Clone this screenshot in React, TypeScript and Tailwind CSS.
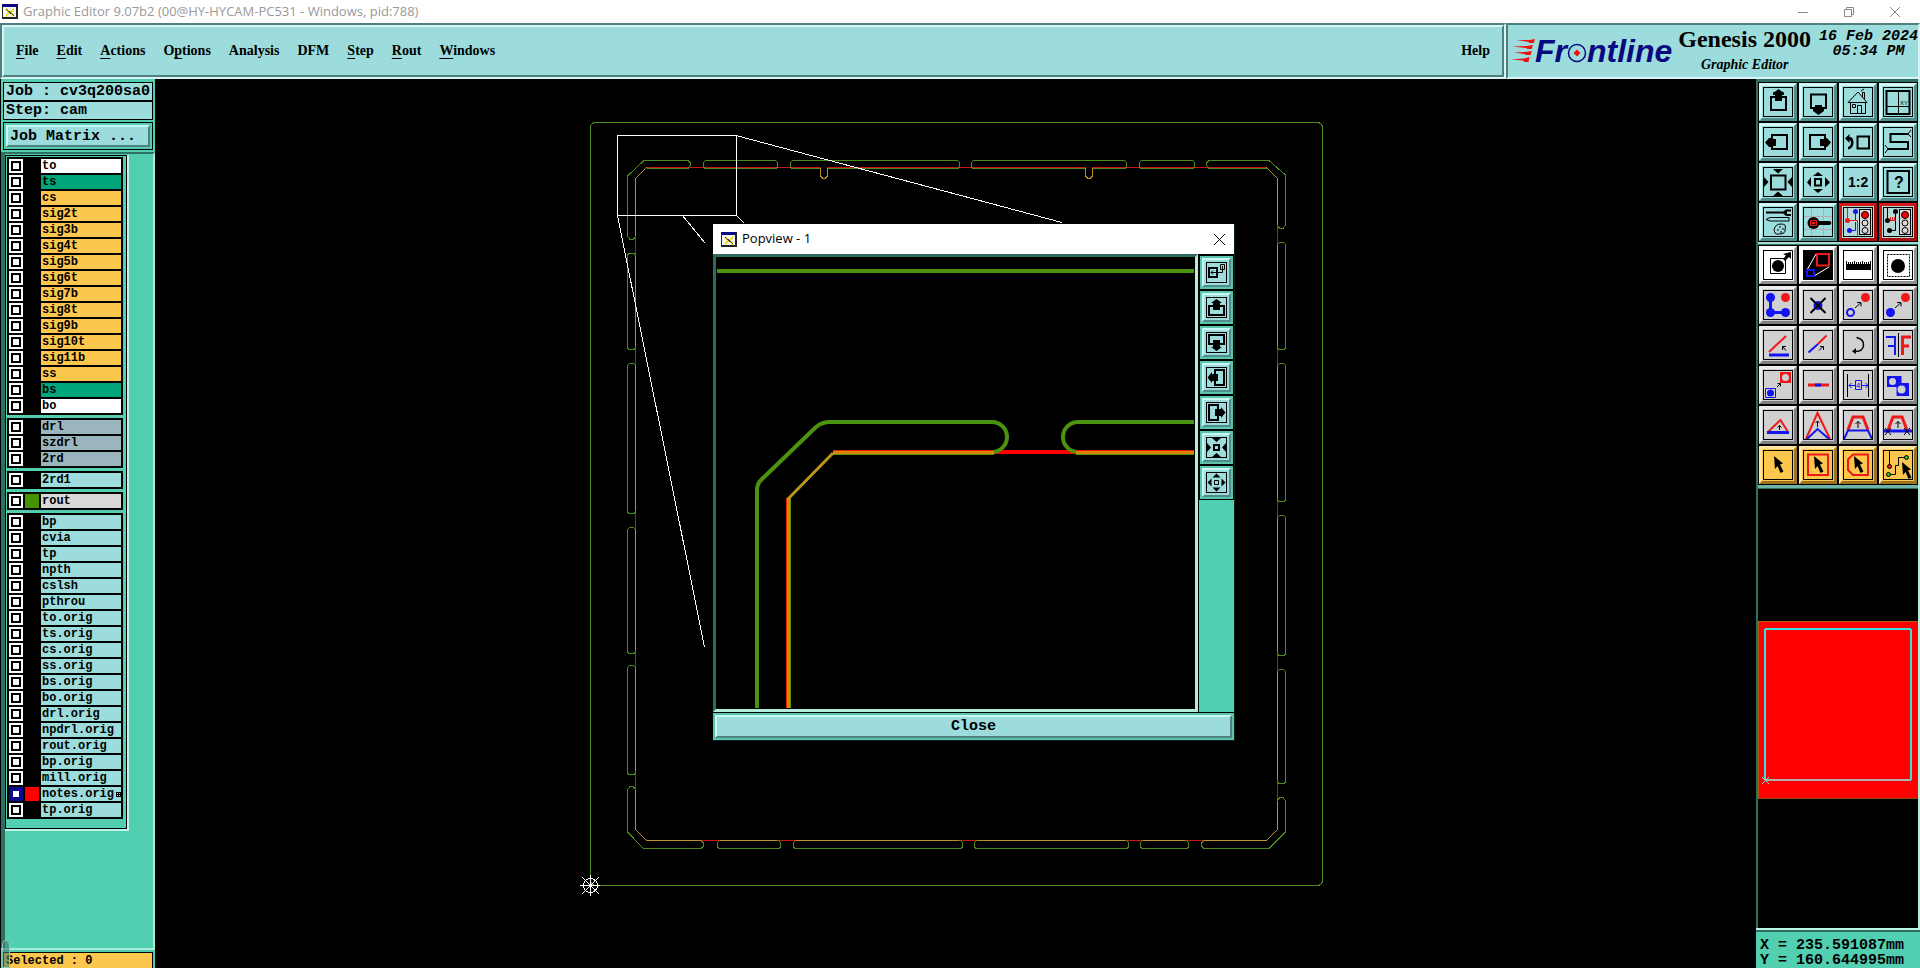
import type { ReactNode } from "react";
import clsx from "clsx";

const MENUS: { label: string; mnemonic: number }[] = [
  { label: "File", mnemonic: 0 },
  { label: "Edit", mnemonic: 0 },
  { label: "Actions", mnemonic: 0 },
  { label: "Options", mnemonic: 1 },
  { label: "Analysis", mnemonic: -1 },
  { label: "DFM", mnemonic: -1 },
  { label: "Step", mnemonic: 0 },
  { label: "Rout", mnemonic: 0 },
  { label: "Windows", mnemonic: 0 },
];

const WHITE = "bg-white";
const GREEN = "bg-[#00a57c]";
const AMBER = "bg-[#fdc64c]";
const SLATE = "bg-[#9bb5bf]";
const CYAN = "bg-[#9cdcdc]";
const GRAY = "bg-[#d9d9d9]";

type Layer = { name: string; tone: string; swatch?: string; active?: boolean };

const layers = (tone: string, names: string[]): Layer[] =>
  names.map((name) => ({ name, tone }));

const LAYER_GROUPS: Layer[][] = [
  [
    ...layers(WHITE, ["to"]),
    ...layers(GREEN, ["ts"]),
    ...layers(AMBER, [
      "cs",
      "sig2t",
      "sig3b",
      "sig4t",
      "sig5b",
      "sig6t",
      "sig7b",
      "sig8t",
      "sig9b",
      "sig10t",
      "sig11b",
      "ss",
    ]),
    ...layers(GREEN, ["bs"]),
    ...layers(WHITE, ["bo"]),
  ],
  layers(SLATE, ["drl", "szdrl", "2rd"]),
  layers(CYAN, ["2rd1"]),
  [{ name: "rout", tone: GRAY, swatch: "bg-[#459300]" }],
  [
    ...layers(CYAN, [
      "bp",
      "cvia",
      "tp",
      "npth",
      "cslsh",
      "pthrou",
      "to.orig",
      "ts.orig",
      "cs.orig",
      "ss.orig",
      "bs.orig",
      "bo.orig",
      "drl.orig",
      "npdrl.orig",
      "rout.orig",
      "bp.orig",
      "mill.orig",
    ]),
    { name: "notes.orig", tone: CYAN, swatch: "bg-[#ff0000]", active: true },
    ...layers(CYAN, ["tp.orig"]),
  ],
];

const RED = "#f01818";
const BLUE = "#1414f0";

/* ---------- toolbar icons, drawn on a 30x30 grid ---------- */

const Cursor = ({ x = 0, y = 0 }: { x?: number; y?: number }) => (
  <path
    transform={`translate(${x} ${y})`}
    d="M11 6 L20 13.500 L17 14.500 L20.500 21.500 L17.500 23 L14.500 16 L12 19 Z"
  />
);

const TrafficLight = () => (
  <>
    <rect x="16.500" y="2.500" width="11" height="25" fill="#d9d9d9" stroke="#000" />
    <circle cx="22" cy="8" r="3.500" fill="#f00" stroke="#000" />
    <circle cx="22" cy="16" r="3" fill="#d9d9d9" stroke="#000" />
    <circle cx="22" cy="23.500" r="3" fill="#d9d9d9" stroke="#000" />
  </>
);

const Thin = ({ d, color = "#000" }: { d: string; color?: string }) => (
  <path d={d} fill="none" stroke={color} strokeWidth="1" />
);

const Thick = ({ d, color = "#000", w = 2 }: { d: string; color?: string; w?: number }) => (
  <path d={d} fill="none" stroke={color} strokeWidth={w} />
);

type Tool = { label: string; icon: ReactNode; tone?: "white" | "alert" | "amber" | "gray" };

const VIEW_TOOLS: Tool[] = [
  {
    label: "Pan up",
    icon: (
      <>
        <Thick d="M12 10 H8 V23 H23 V10 H19" />
        <path d="M15.500 2 L18 4 L21 5.500 V8 H19 V14 H12 V8 H10 V5.500 L13 4 Z" />
      </>
    ),
  },
  {
    label: "Pan down",
    icon: (
      <>
        <Thick d="M12 21 H8 V7.500 H23 V21 H19" />
        <path d="M12 18 H19 V22 H21 V24 L15.500 28 L10 24 V22 H12 Z" />
      </>
    ),
  },
  {
    label: "Home",
    icon: (
      <>
        <Thin d="M5 15.500 L15 5 L24 15.500 M5 15.500 H24 M7.500 15 V26.500 H22.500 V15 M14.500 26.500 V18.500 H18.500 V26.500" />
        <Thin d="M9.500 17.500 H12.500 V20.500 H9.500 Z M19.500 10 V5.500 H21.500 V12 M18 4 L21 2" />
      </>
    ),
  },
  {
    label: "Pan to coordinates",
    icon: (
      <>
        <Thick d="M3.500 4 H26.500 V27 H3.500 Z" />
        <Thin d="M15.500 4 V27 M3 19.500 H27" />
        <text x="17" y="18" fontSize="6" fontFamily="Liberation Sans">
          XY
        </text>
      </>
    ),
  },
  {
    label: "Pan left",
    icon: (
      <>
        <Thick d="M9 12 V8 H24 V22 H9 V19" />
        <path d="M2 15.500 L6 11 H8 V12 H13 V19 H8 V20 H6 Z" />
      </>
    ),
  },
  {
    label: "Pan right",
    icon: (
      <>
        <Thick d="M22 12 V8 H7 V22 H22 V19" />
        <path d="M28 15.500 L24 11 H22 V12 H17 V19 H22 V20 H24 Z" />
      </>
    ),
  },
  {
    label: "Previous view",
    icon: (
      <>
        <Thick d="M14.500 9.500 H26 V21.500 H14.500 Z" />
        <path d="M2 11.500 L6.500 7 V10 Q10.500 10 10.500 15.500 Q10.500 21.500 5 22.500 V20 Q8 19 8 15.500 Q8 13 6.500 13 V16 Z" />
      </>
    ),
  },
  {
    label: "Serpentine pan",
    icon: (
      <>
        <Thick d="M25 7 H7.500 V15 H25 V22 H5" />
        <Thin d="M28 3 L25 7 L28 10 M2 18 L5 22 L2 26" />
      </>
    ),
  },
  {
    label: "Zoom in",
    icon: (
      <>
        <Thick d="M8 8.500 H22.500 V22.500 H8 Z" />
        <path d="M10 2 H20 L15 6.500 Z M10 29 H20 L15 24.500 Z M1 10 V20 L5.500 15 Z M29 10 V20 L24.500 15 Z" />
      </>
    ),
  },
  {
    label: "Zoom out",
    icon: (
      <>
        <Thick d="M12 12 H18 V18.500 H12 Z" />
        <path d="M10 9 L15 5 L20 9 Z M10 22 L15 26 L20 22 Z M8 10 L4 15.500 L8 20 Z M22 10 L27 15.500 L22 20 Z" />
      </>
    ),
  },
  {
    label: "Scale one to two",
    icon: (
      <text x="5" y="20" fontSize="14" fontWeight="bold" fontFamily="Liberation Sans">
        1:2
      </text>
    ),
  },
  {
    label: "Query",
    icon: (
      <>
        <Thick d="M4.500 4 H26 V26 H4.500 Z" />
        <text x="11" y="21" fontSize="16" fontWeight="bold" fontFamily="Liberation Sans">
          ?
        </text>
      </>
    ),
  },
  {
    label: "Options and colors",
    icon: (
      <>
        <Thick d="M3 5.500 H20" />
        <path d="M28 2.500 H23 L19 5.500 L23 9 H28 V7 H24 V4.500 H28 Z" />
        <path d="M3 12.500 L7 10.500 H26 V14 H7 Z" fill="#9cdcdc" stroke="#000" />
        <Thin d="M11 23 Q12 17 18 17 Q24 17 22 22 Q23 27 16 27 Q14 28 12 26 Z M16 20 h2 M19 22 h2 M14 23 h2 M17 25 h2" />
      </>
    ),
  },
  {
    label: "Snap to grid",
    icon: (
      <>
        <Thin d="M8.500 1 V29 M20.500 1 V29 M1 9.500 H29 M1 22.500 H29" color="#b8a8b0" />
        <path d="M16 14 H27 L28.500 16 L27 18 H16 Z" />
        <circle cx="10.500" cy="16" r="6" />
        <Thin d="M7.500 13.500 H13.500 V18.500 H7.500 Z" color={RED} />
        <rect x="9" y="15" width="3" height="2" fill={RED} />
      </>
    ),
  },
  {
    label: "Control point snap",
    tone: "alert",
    icon: (
      <>
        <Thin d="M4.500 0 V13.500 H14.500 V30" color={RED} />
        <circle cx="4.500" cy="13.500" r="2.500" fill={RED} />
        <Thin d="M12.500 4 V13 M12.500 15 V23.500 H7" color={BLUE} />
        <circle cx="12.500" cy="4.500" r="2.500" fill={BLUE} />
        <circle cx="6.500" cy="23.500" r="2.500" fill={BLUE} />
        <TrafficLight />
      </>
    ),
  },
  {
    label: "Control net snap",
    tone: "alert",
    icon: (
      <>
        <Thin d="M4.500 0 V13.500 H8 M12.500 4 V23.500 H7" />
        <circle cx="4.500" cy="13.500" r="2.500" />
        <circle cx="12.500" cy="4.500" r="2.500" />
        <circle cx="6.500" cy="23.500" r="2.500" />
        <Thin d="M7.500 10 V13.500 H13 M9.500 10 V13 M11.500 10 V13" color={RED} />
        <TrafficLight />
      </>
    ),
  },
];

const EDIT_TOOLS: Tool[] = [
  {
    label: "Select features",
    tone: "white",
    icon: (
      <>
        <Thin d="M7.500 8.500 H22.500 V23.500 H7.500 Z" />
        <circle cx="15" cy="16" r="6" />
        <path d="M28 2 V9 L26 7 L22 11 L20 9 L23 5.500 L20 4 Z" />
      </>
    ),
  },
  {
    label: "Popview",
    tone: "white",
    icon: (
      <>
        <rect width="30" height="30" />
        <Thin d="M13 4 L4 20 M11 26 L26 17" color="#fff" />
        <Thick d="M14 4 H26 V15.500 H14 Z" color={RED} />
        <Thick d="M4 20 H11 V26 H4 Z" color={BLUE} />
      </>
    ),
  },
  {
    label: "Measure",
    tone: "white",
    icon: (
      <g shapeRendering="crispEdges">
        <rect x="3" y="14" width="25" height="6" />
        <path
          d="M3.500 11 V16 M5.500 12 V16 M7.500 12 V16 M9.500 12 V16 M11.500 11 V16 M13.500 12 V16 M15.500 12 V16 M17.500 12 V16 M19.500 11 V16 M21.500 12 V16 M23.500 12 V16 M25.500 12 V16 M27.500 11 V16"
          stroke="#000"
        />
      </g>
    ),
  },
  {
    label: "Reference select",
    tone: "white",
    icon: (
      <>
        <rect
          x="4.500"
          y="4.500"
          width="22"
          height="22"
          fill="none"
          stroke="#000"
          strokeDasharray="2 1"
        />
        <circle cx="15" cy="16" r="7" />
      </>
    ),
  },
  {
    label: "Chain",
    icon: (
      <>
        <Thick d="M7.500 8 V22.500 H22" color={BLUE} w={3} />
        <circle cx="7.500" cy="7.500" r="4.500" fill={BLUE} />
        <circle cx="7.500" cy="22.500" r="4.500" fill={BLUE} />
        <circle cx="22.500" cy="22.500" r="4.500" fill={BLUE} />
        <circle cx="22.500" cy="7.500" r="4.500" fill={RED} />
      </>
    ),
  },
  {
    label: "Delete",
    icon: (
      <>
        <circle cx="15" cy="15.500" r="4.500" fill={BLUE} />
        <Thick d="M7.500 8 L22.500 23 M22.500 8 L7.500 23" />
      </>
    ),
  },
  {
    label: "Move",
    icon: (
      <>
        <circle cx="7.500" cy="22.500" r="3.500" fill="none" stroke={BLUE} strokeWidth="2" />
        <Thin d="M12 18 L18 12.500 M14 12.500 H18 V16.500" />
        <circle cx="22.500" cy="7.500" r="4.500" fill={RED} />
      </>
    ),
  },
  {
    label: "Copy",
    icon: (
      <>
        <circle cx="7.500" cy="22.500" r="4.500" fill={BLUE} />
        <Thin d="M12 18 L18 12.500 M14 12.500 H18 V16.500" />
        <circle cx="22.500" cy="7.500" r="4.500" fill={RED} />
      </>
    ),
  },
  {
    label: "Rotate",
    icon: (
      <>
        <Thick d="M6 22 L23 6" color={RED} />
        <Thick d="M6 25 H26" color={BLUE} w={3} />
        <Thin d="M23 20.500 L19.500 16.500 M19.500 20 V16.500 H23" />
      </>
    ),
  },
  {
    label: "Stretch line",
    icon: (
      <>
        <Thick d="M15 14 L23.500 5.500" color={RED} w={2} />
        <Thick d="M5.500 22.500 L15 14" color={BLUE} w={2} />
        <Thin d="M16 20.500 L20 16.500 M17 16.500 H20.500 V20" />
      </>
    ),
  },
  {
    label: "Change arc",
    icon: (
      <>
        <path
          d="M13.500 7.500 Q21 9 20.500 15.500 Q20 21.500 12 21.500"
          fill="none"
          stroke="#000"
          strokeWidth="1.500"
        />
        <path d="M9 21.500 L13 18 V24 Z" />
      </>
    ),
  },
  {
    label: "Mirror",
    icon: (
      <>
        <Thick d="M3 7 H12 V25 M12 16 H5" color={BLUE} w={2} />
        <Thin d="M15.500 3 V27" />
        <Thick d="M28 7 H19.500 V25 M20 16 H26" color={RED} w={3} />
      </>
    ),
  },
  {
    label: "Substitute",
    icon: (
      <>
        <Thin d="M2.500 18.500 H12.500 V27.500 H2.500 Z" color={BLUE} />
        <circle cx="7.500" cy="23" r="3.500" fill={BLUE} />
        <rect x="17" y="2" width="11" height="11" fill={RED} />
        <circle cx="22.500" cy="7.500" r="3.500" fill="#d0d0d0" />
        <Thin d="M14 17 L17 14 M14.500 13.500 H17.500 V16.500" />
      </>
    ),
  },
  {
    label: "Break line",
    icon: (
      <>
        <Thick d="M5 15 H26" color={RED} w={3} />
        <Thick d="M12 15 H18" color={BLUE} w={3} />
      </>
    ),
  },
  {
    label: "Resize",
    icon: (
      <>
        <Thin d="M4.500 4 V27 M25.500 4 V27" />
        <Thin
          d="M12.500 10.500 H18.500 V19.500 H12.500 Z M12 15.500 H6 M8.500 13 L6 15.500 L8.500 18 M19 15.500 H25 M22.500 13 L25 15.500 L22.500 18"
          color={BLUE}
        />
        <text x="13" y="18" fontSize="8" fontFamily="Liberation Sans" fill={BLUE}>
          4
        </text>
      </>
    ),
  },
  {
    label: "Merge surfaces",
    icon: (
      <>
        <path d="M4 6 H18.500 V13 H26 V26 H13.500 V17 H4 Z" fill={BLUE} />
        <circle cx="9.500" cy="11.500" r="3.500" fill="#d0d0d0" />
        <circle cx="18.500" cy="19.500" r="4" fill="#d0d0d0" />
      </>
    ),
  },
  {
    label: "Triangle",
    icon: (
      <>
        <Thick d="M5 22 L17.500 10 L25 22" color={RED} />
        <Thick d="M4 22.500 H26" color={BLUE} w={3} />
        <Thin d="M16.500 20 V15.500 M14.500 17.500 L16.500 15.500 L18.500 17.500" />
      </>
    ),
  },
  {
    label: "Peak",
    icon: (
      <>
        <Thick d="M3 29 L14.500 3 L27 29" color={RED} />
        <Thick d="M4 29 L14.500 19 L26 29" color={BLUE} />
        <Thin d="M14.500 17 V11 M12.500 13 L14.500 11 L16.500 13" />
      </>
    ),
  },
  {
    label: "Trapeze",
    icon: (
      <>
        <Thick d="M5 20 L10 7 H20 L25 20" color={RED} w={3} />
        <Thick d="M1 29 L5 20.500 H25 L29 29" color={BLUE} w={2} />
        <Thin d="M15 18 V11.500 M12.500 14 L15 11.500 L17.500 14" />
      </>
    ),
  },
  {
    label: "Trapeze clip",
    icon: (
      <>
        <Thick d="M5 20 L10 7 H19 L24 20" color={RED} w={3} />
        <Thick d="M1 21 H29" color={BLUE} w={3} />
        <Thin d="M15 18 V11.500 M12.500 14 L15 11.500 L17.500 14 M2 18 L8 25 M8 18 L2 25 M21 18 L27 25 M27 18 L21 25" />
      </>
    ),
  },
  { label: "Pointer", tone: "amber", icon: <Cursor /> },
  {
    label: "Window select",
    tone: "amber",
    icon: (
      <>
        <Thick d="M5 4.500 H25 V25 H5 Z" color={RED} />
        <Cursor />
      </>
    ),
  },
  {
    label: "Polygon select",
    tone: "amber",
    icon: (
      <>
        <Thick d="M10 4.500 H25 V25 H10 L5 20 V9.500 Z" color={RED} />
        <Cursor />
      </>
    ),
  },
  {
    label: "Net select",
    tone: "amber",
    icon: (
      <>
        <Thin d="M6.500 0 V15 M23 7.500 H15.500 V15.500 H12.500 V24.500 H6" />
        <circle cx="6.500" cy="16.500" r="2" fill={RED} stroke="#000" />
        <circle cx="23.500" cy="7.500" r="2" fill="#2fc41f" stroke="#000" />
        <circle cx="5.500" cy="24.500" r="2" fill="#2fc41f" stroke="#000" />
        <Cursor x={8} y={6} />
      </>
    ),
  },
];

/* ---------- popview icons, 21x21 grid ---------- */

const POPVIEW_TOOLS: Tool[] = [
  {
    label: "Grab view",
    icon: (
      <>
        <Thick d="M3 6 H11 V15 H3 Z" />
        <Thin d="M14.500 2.500 H18.500 V7.500 H14.500 Z M16.500 4 V10.500 H5 M7 8.500 L5 10.500 L7 12.500" />
      </>
    ),
  },
  {
    label: "Popview pan up",
    icon: (
      <>
        <Thick d="M7 9 H3 V18 H18 V9 H14" />
        <path d="M10.500 2 L16 6 H14 V13 H7 V6 H5 Z" />
      </>
    ),
  },
  {
    label: "Popview pan down",
    icon: (
      <>
        <Thick d="M7 12 H3 V3 H18 V12 H14" />
        <path d="M10.500 19 L16 15 H14 V8 H7 V15 H5 Z" />
      </>
    ),
  },
  {
    label: "Popview pan left",
    icon: (
      <>
        <Thick d="M9 7 V3 H18 V18 H9 V14" />
        <path d="M1.500 10.500 L6 5 V7 H12 V14 H6 V16 Z" />
      </>
    ),
  },
  {
    label: "Popview pan right",
    icon: (
      <>
        <Thick d="M12 7 V3 H3 V18 H12 V14" />
        <path d="M19.500 10.500 L15 5 V7 H9 V14 H15 V16 Z" />
      </>
    ),
  },
  {
    label: "Popview zoom in",
    icon: (
      <>
        <Thick d="M8 8 H13 V13 H8 Z" />
        <path d="M6 1 H15 L10.500 5 Z M6 20 H15 L10.500 16 Z M1 6 V15 L5 10.500 Z M20 6 V15 L16 10.500 Z" />
      </>
    ),
  },
  {
    label: "Popview zoom out",
    icon: (
      <>
        <Thin d="M8.500 8.500 H12.500 V12.500 H8.500 Z" />
        <path d="M6.500 5.500 L10.500 1.500 L14.500 5.500 Z M6.500 15.500 L10.500 19.500 L14.500 15.500 Z M5.500 6.500 L1.500 10.500 L5.500 14.500 Z M15.500 6.500 L19.500 10.500 L15.500 14.500 Z" />
      </>
    ),
  },
];

const AppIcon = () => (
  <svg viewBox="0 0 16 15" className="h-[15px] w-4" shapeRendering="crispEdges">
    <rect width="16" height="15" fill="#222" />
    <rect x="1" y="3" width="13" height="10" fill="#f4f4f4" />
    <rect width="15" height="3" fill="#0a0a80" />
    <path d="M4 5 L12 12 M12 5 L4 12" stroke="#f2e21c" strokeWidth="2" />
    <path d="M4 5 L12 12" stroke="#444" strokeWidth="1" />
  </svg>
);

const TitleBar = () => (
  <header className="flex h-[23px] shrink-0 items-center bg-white pl-[2px]">
    <AppIcon />
    <h1 className="ml-[5px] font-['Open_Sans',sans-serif] text-[13px] text-[#999]">
      Graphic Editor 9.07b2 (00@HY-HYCAM-PC531 - Windows, pid:788)
    </h1>
    <div className="ml-auto flex h-full pr-[2px]">
      <button aria-label="Minimize" className="flex w-[46px] items-center justify-center">
        <svg viewBox="0 0 10 10" className="size-[10px]" fill="none" stroke="#888">
          <path d="M0 5.500 H10" />
        </svg>
      </button>
      <button aria-label="Restore" className="flex w-[46px] items-center justify-center">
        <svg viewBox="0 0 10 10" className="size-[10px]" fill="none" stroke="#888">
          <path d="M0.500 2.500 H7.500 V9.500 H0.500 Z M2.500 2 V0.500 H9.500 V7.500 H8" />
        </svg>
      </button>
      <button aria-label="Close window" className="flex w-[46px] items-center justify-center">
        <svg viewBox="0 0 10 10" className="size-[10px]" fill="none" stroke="#888">
          <path d="M0 0 L10 10 M10 0 L0 10" />
        </svg>
      </button>
    </div>
  </header>
);

const MenuLabel = ({ label, mnemonic }: { label: string; mnemonic: number }) => {
  if (mnemonic < 0) return <>{label}</>;
  return (
    <>
      {label.slice(0, mnemonic)}
      <span className="underline decoration-1 underline-offset-[3px]">{label[mnemonic]}</span>
      {label.slice(mnemonic + 1)}
    </>
  );
};

const Logo = () => (
  <div
    aria-label="Frontline"
    className="flex items-center font-['Liberation_Sans',sans-serif] text-[32px] leading-[32px] font-bold text-[#0a0a80] italic"
  >
    <svg viewBox="0 0 22 24" className="h-6 w-6" preserveAspectRatio="none" fill="#f01010">
      <path d="M5 1 L17 1 L22 0 L21 4 L17 4 L16 3 Z" />
      <path d="M1 7.500 L15 7 L20 6 L19 10 L15 10 L14 9 Z" />
      <path d="M3 13.500 L13 13 L19 12 L18 16 L14 16 L12 15 Z" />
      <path d="M0 20.500 L12 19.500 L17 18 L16 23 L12 23 L11 21.500 Z" />
    </svg>
    <span>Fr</span>
    <svg viewBox="0 0 20 20" className="mt-1 size-5">
      <circle cx="10" cy="10" r="8.500" fill="none" stroke="#0a0a80" strokeWidth="1.500" />
      <path d="M10 6.500 L13.500 10 L10 13.500 L6.500 10 Z" fill="#f01010" />
    </svg>
    <span>ntline</span>
  </div>
);

const MenuBar = () => (
  <div className="flex h-14 shrink-0 font-['Liberation_Serif',serif] font-bold">
    <div className="flex-1 border-2 border-t-[#4f7f7f] border-r-[#d8f4f4] border-b-[#d8f4f4] border-l-[#4f7f7f]">
      <nav className="flex h-full items-center gap-[18px] border-2 border-t-[#d8f4f4] border-r-[#4f7f7f] border-b-[#4f7f7f] border-l-[#d8f4f4] bg-[#9cdcdc] px-3 pb-[2px] text-[14px]">
        {MENUS.map((menu) => (
          <button key={menu.label}>
            <MenuLabel {...menu} />
          </button>
        ))}
        <button className="ml-auto">Help</button>
      </nav>
    </div>
    <div className="flex w-[414px] border-2 border-t-[#4f7f7f] border-r-[#d8f4f4] border-b-[#d8f4f4] border-l-[#4f7f7f] bg-[#9cdcdc] pl-[3px]">
      <Logo />
      <div className="ml-auto flex flex-col items-center pt-[2px]">
        <span className="text-[24px] leading-[24px] whitespace-nowrap">Genesis 2000</span>
        <span className="text-[14px] leading-[28px] italic">Graphic Editor</span>
      </div>
      <div className="ml-2 flex flex-col items-center pt-1 font-['Liberation_Mono',monospace] text-[15px] leading-[15px] whitespace-nowrap italic">
        <span>16 Feb 2024</span>
        <span>05:34 PM</span>
      </div>
    </div>
  </div>
);

const LayerRow = ({ name, tone, swatch = "bg-black", active = false }: Layer) => (
  <label className="flex h-[14px] gap-[2px]">
    <input
      type="checkbox"
      defaultChecked={active}
      className="size-[14px] appearance-none border-2 border-white bg-white shadow-[inset_0_0_0_2px_#000] checked:border-[#0a0a90] checked:shadow-[inset_0_0_0_2px_#0a0a90]"
    />
    <span className={clsx("w-[14px]", swatch)} />
    <span className={clsx("flex flex-1 items-center pt-px pl-px text-[12px] leading-[13px]", tone)}>
      {name}
      {active && (
        <svg viewBox="0 0 5 5" className="ml-[2px] size-[5px]" shapeRendering="crispEdges">
          <path d="M0.500 0.500 H4.500 V4.500 H0.500 Z M2.500 0 V5 M0 2.500 H5" fill="none" stroke="#000" />
        </svg>
      )}
    </span>
  </label>
);

const Sidebar = () => (
  <aside className="relative flex w-[155px] shrink-0 flex-col border-l border-black bg-[#52ceb0] font-['Liberation_Mono',monospace] font-bold">
    <div className="flex flex-col px-[2px] pt-[3px] pb-[2px] text-[15px]">
      <p className="border border-black bg-[#9cdcdc] pt-px pl-[2px] leading-[16px]">
        Job : cv3q200sa0
      </p>
      <p className="border border-black bg-[#9cdcdc] pt-px pl-[2px] leading-[16px]">Step: cam</p>
      <div className="mt-[2px] border border-black p-[2px]">
        <button className="block w-full border-2 border-t-[#c8f8f4] border-r-[#4f8080] border-b-[#4f8080] border-l-[#c8f8f4] bg-[#9cdcdc] pt-px pl-[2px] text-left leading-[17px]">
          Job Matrix ...
        </button>
      </div>
    </div>
    <div className="flex-1 border-t-2 border-r-2 border-l-4 border-t-[#2f6f62] border-r-[#a8ecd8] border-l-[#2f6f62] pt-px">
      <div className="w-[124px] border-r-2 border-b-2 border-[#c0f4e6]">
        <div className="flex flex-col gap-[3px] border border-black px-px pt-px pb-[9px]">
          {LAYER_GROUPS.map((group) => (
            <div key={group[0].name} className="mr-[2px] flex flex-col gap-[2px] bg-black p-[2px]">
              {group.map((layer) => (
                <LayerRow key={layer.name} {...layer} />
              ))}
            </div>
          ))}
        </div>
      </div>
    </div>
    <div className="border-t-2 border-[#a8ecd8] px-[2px] pt-[2px]">
      <p className="border border-b-0 border-black bg-[#fdc64c] pt-px pl-[2px] text-[12px] leading-[14px]">
        Selected : 0
      </p>
    </div>
    <span className="absolute bottom-0 left-px h-7 w-2 rounded-t border border-[#7fcdb8] bg-[#3c7f70]/60" />
  </aside>
);

/* ---------- board drawing ---------- */

const TOP_SLOTS = [
  [703, 777],
  [790, 959],
  [971, 1126],
  [1139, 1194],
];
const BOTTOM_SLOTS = [
  [717, 780],
  [793, 962],
  [974, 1128],
  [1140, 1188],
];
const LEFT_SLOTS = [
  [253, 349],
  [363, 513],
  [527, 653],
  [665, 774],
];
const RIGHT_SLOTS = [
  [242, 349],
  [363, 501],
  [515, 655],
  [669, 783],
];

const Board = () => (
  <svg
    viewBox="155 79 1601 889"
    preserveAspectRatio="xMinYMin meet"
    className="block h-full w-full"
    fill="none"
    strokeWidth="1"
    shapeRendering="crispEdges"
  >
    <rect x="590.500" y="122.500" width="732" height="763" rx="5" stroke="#4c8a1c" />
    <path
      stroke="#cc1414"
      d="M646.500 167.500 H1266.500 L1277.500 178.500 V829.500 L1266.500 840.500 H646.500 L635.500 829.500 V178.500 Z"
    />
    <g stroke="#4c8a1c">
      {TOP_SLOTS.map(([a, b]) => (
        <rect key={a} x={a + 0.5} y="160.500" width={b - a} height="8" rx="3" />
      ))}
      {BOTTOM_SLOTS.map(([a, b]) => (
        <rect key={a} x={a + 0.5} y="840.500" width={b - a} height="8" rx="3" />
      ))}
      {LEFT_SLOTS.map(([a, b]) => (
        <rect key={a} x="627.500" y={a + 0.5} width="8" height={b - a} rx="3" />
      ))}
      {RIGHT_SLOTS.map(([a, b]) => (
        <rect key={a} x="1277.500" y={a + 0.5} width="8" height={b - a} rx="3" />
      ))}
      <path d="M646.500 168.500 H688 L690.500 165.500 V163 L688 160.500 H644 L627.500 176 V236 L630 239.500 H633 L635.500 237" />
      <path d="M1266.500 168.500 H1209 L1206.500 165.500 V163 L1209 160.500 H1269 L1285.500 175 V225 L1283 228.500 H1280 L1277.500 226" />
      <path d="M701 840.500 L703.500 843 V846 L701 848.500 H643.500 L627.500 832 V790 L630 786.500 H633 L635.500 789" />
      <path d="M1204 840.500 L1201.500 843 V846 L1204 848.500 H1269 L1285.500 832 V801 L1283 797.500 H1280 L1277.500 800" />
    </g>
    <g stroke="#b8902c">
      {LEFT_SLOTS.map(([a, b]) => (
        <path key={a} d={`M635.5 ${a + 3} V${b - 3}`} />
      ))}
      {RIGHT_SLOTS.map(([a, b]) => (
        <path key={a} d={`M1277.5 ${a + 3} V${b - 3}`} />
      ))}
      {BOTTOM_SLOTS.map(([a, b]) => (
        <path key={a} d={`M${a + 3} 840.5 H${b - 3}`} />
      ))}
      <path d="M646.500 167.500 L635.500 178.500 V236 M635.500 790 V829.500 L646.500 840.500 H701" />
      <path d="M1266.500 167.500 L1277.500 178.500 V225 M1277.500 801 V829.500 L1266.500 840.500 H1204" />
      {/* the notches are open at the top, so the edge is cleared first */}
      <path d="M821 168 H827 M1086 168 H1092" stroke="#000" strokeWidth="2" />
      <path d="M820.500 168 V176 L823 178.500 H825 L827.500 176 V168" />
      <path d="M1085.500 168 V176 L1088 178.500 H1090 L1092.500 176 V168" />
    </g>
    <g stroke="#fff">
      <path d="M617.500 135.500 H736.500 V215.500 H617.500 Z" />
      <path d="M736 135.500 L1062 222.500 M617.500 215.500 L704.500 647 M682.500 215.500 L705 243 M736.500 215.500 L744 223" />
      <circle cx="590.500" cy="885.500" r="7" />
      <path d="M580 885.500 H600 M590.500 875 V896 M582 877 L599 894 M599 877 L582 894" />
    </g>
  </svg>
);

const PopviewDrawing = () => (
  <svg
    viewBox="716 257 479 452"
    preserveAspectRatio="xMinYMin slice"
    className="absolute inset-0 h-full w-full"
    fill="none"
    strokeWidth="4"
  >
    <path d="M990 452 H1080" stroke="#f00" />
    <g stroke="#4b930f">
      <path d="M717 271 H1194" />
      <path d="M757 708 V490 Q757 484 761 480 L816 427 Q822 422 830 422 H992 A15 15 0 0 1 992 452" />
      <path d="M1194 422 H1078 A15 15 0 0 0 1078 452" />
    </g>
    <path d="M833 454.500 H994 M1076 454.500 H1194 M790.500 498 V708" stroke="#5f9410" strokeWidth="1" />
    <path d="M833 450.500 H994 M1076 450.500 H1194 M786.500 498 V708" stroke="#f02000" strokeWidth="1" />
    <path d="M833 452.500 H994 M1076 452.500 H1194" stroke="#d8860a" strokeWidth="3" />
    <path d="M788.500 498 V708" stroke="#e88400" strokeWidth="3" />
    <path d="M788 499 L833 453" stroke="#b8961a" strokeWidth="3" />
  </svg>
);

const Popview = () => (
  <section className="absolute top-[145px] left-[558px] flex h-[517px] w-[522px] flex-col border-r border-b border-[#10201c] bg-black">
    <div className="flex h-[30px] shrink-0 items-center bg-white pl-2">
      <AppIcon />
      <h2 className="ml-[5px] font-['Open_Sans',sans-serif] text-[13px] text-black">Popview - 1</h2>
      <button aria-label="Dismiss popview" className="ml-auto flex h-full w-[30px] items-center justify-center">
        <svg viewBox="0 0 11 11" className="size-[11px]" stroke="#000">
          <path d="M0 0 L11 11 M11 0 L0 11" />
        </svg>
      </button>
    </div>
    <div className="flex flex-1">
      <div className="relative flex-1 border-[3px] border-t-[#2f6a62] border-r-[#b4ecdc] border-b-[#b4ecdc] border-l-[#2f6a62]">
        <PopviewDrawing />
      </div>
      <div className="ml-px w-[35px] bg-[#52ceb0]">
        <div className="flex flex-col gap-[2px] bg-black px-px pt-[2px] pb-px">
          {POPVIEW_TOOLS.map((tool) => (
            <button
              key={tool.label}
              aria-label={tool.label}
              className="size-[33px] border-2 border-[#5cc4ac] bg-[#9cdcdc]"
            >
              <span className="flex size-[29px] items-center justify-center border-2 border-t-[#c8f8f4] border-r-[#4f8c8c] border-b-[#4f8c8c] border-l-[#c8f8f4]">
                <svg viewBox="0 0 21 21" className="size-[21px] outline -outline-offset-1 outline-black">
                  {tool.icon}
                </svg>
              </span>
            </button>
          ))}
        </div>
      </div>
    </div>
    <div className="mt-px flex border-2 border-[#5cc4ac]">
      <button className="flex-1 border-2 border-t-[#c8f8f4] border-r-[#4f8080] border-b-[#4f8080] border-l-[#c8f8f4] bg-[#9cdcdc] pt-px font-['Liberation_Mono',monospace] text-[15px] leading-[18px] font-bold">
        Close
      </button>
    </div>
  </section>
);

const toneClasses = {
  cyan: "bg-[#9cdcdc] border-t-[#d2f6f2] border-l-[#d2f6f2] border-r-[#4f8c8c] border-b-[#4f8c8c]",
  gray: "bg-[#d0d0d0] border-t-[#ececec] border-l-[#ececec] border-r-[#808080] border-b-[#808080]",
  white: "bg-white border-t-white border-l-white border-r-[#909090] border-b-[#909090]",
  amber: "bg-[#fdc64c] border-t-[#ffe4a4] border-l-[#ffe4a4] border-r-[#9c7420] border-b-[#9c7420]",
  alert: "bg-[#b8d8d8] border-t-[#d01818] border-l-[#d01818] border-r-[#a81010] border-b-[#a81010]",
};

const ToolGrid = ({ tools, base }: { tools: Tool[]; base: "cyan" | "gray" }) => (
  <div className="grid grid-cols-4 gap-[2px] bg-black p-px">
    {tools.map(({ label, icon, tone }) => (
      <button
        key={label}
        aria-label={label}
        className={clsx(
          "flex size-[38px] items-center justify-center border-[3px]",
          toneClasses[tone ?? base],
        )}
      >
        <svg viewBox="0 0 30 30" className="size-[30px] shrink-0 outline -outline-offset-1 outline-black">
          {icon}
        </svg>
      </button>
    ))}
  </div>
);

const Overview = () => (
  <div className="flex flex-1 flex-col justify-center bg-black">
    <svg viewBox="0 0 160 178" className="mt-[3px] w-full" fill="none" shapeRendering="crispEdges">
      <rect width="160" height="178" fill="#f00" />
      <path d="M0.500 178 V0.500 H160" stroke="#b06010" />
      <path d="M0 177.500 H160" stroke="#8a5000" />
      <rect x="7" y="8" width="146" height="151" rx="2" stroke="#40e0e0" strokeWidth="2" />
      <path d="M9 159 H152" stroke="#b0b0b0" strokeWidth="2" />
      <path d="M4 156 L11 163 M11 156 L4 163" stroke="#9ce0e0" />
    </svg>
  </div>
);

const ToolPanel = () => (
  <aside className="flex w-[164px] shrink-0 flex-col bg-[#52ceb0]">
    <div className="flex flex-1 flex-col border-r-2 border-l-2 border-r-[#b4ecdc] border-l-[#2f6f62]">
      <div className="border-t-[3px] border-[#2f6f62]">
        <ToolGrid tools={VIEW_TOOLS} base="cyan" />
      </div>
      <div className="h-[3px] border-b border-[#2f6f62] bg-[#a4dcd4]" />
      <ToolGrid tools={EDIT_TOOLS} base="gray" />
      <div className="h-1 border-b border-[#2f6f62] bg-[#6cb4a8]" />
      <Overview />
    </div>
    <div className="h-10 border-t-2 border-[#c0f4e6] font-['Liberation_Mono',monospace] text-[15px] leading-[15px] font-bold">
      <div className="h-full border-t-2 border-[#2f6f62] pt-[6px] pl-1">
        <p>X = 235.591087mm</p>
        <p>Y = 160.644995mm</p>
      </div>
    </div>
  </aside>
);

export default function App() {
  return (
    <div className="flex h-screen flex-col overflow-hidden bg-black text-black">
      <TitleBar />
      <MenuBar />
      <div className="flex min-h-0 flex-1">
        <Sidebar />
        <main className="relative min-w-0 flex-1">
          <Board />
          <Popview />
        </main>
        <ToolPanel />
      </div>
    </div>
  );
}
